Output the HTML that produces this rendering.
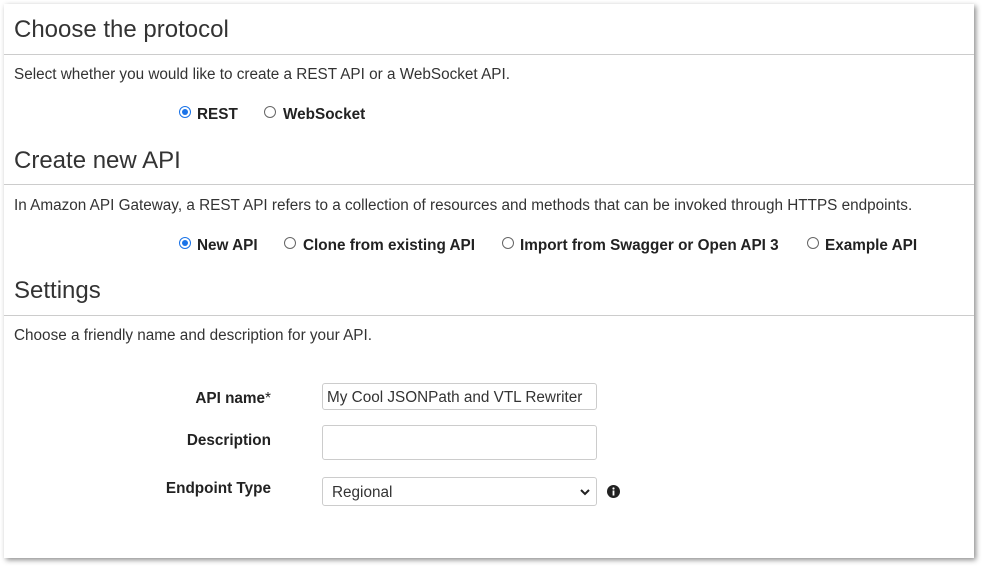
<!DOCTYPE html><html><head><style>
body{margin:0;background:#fff;width:983px;height:567px;overflow:hidden;font-family:"Liberation Sans",Arial,sans-serif;color:#222}
.card{position:absolute;left:4px;top:4px;width:970px;height:554px;background:#fff;box-shadow:2px 2px 5px rgba(0,0,0,.45)}
.a{position:absolute;white-space:nowrap}
h2{position:absolute;margin:0;left:10px;font-weight:normal;font-size:24px;color:#333}
.line{position:absolute;left:0;width:970px;height:1px;background:#ccc}
.p{font-size:15.3px;left:10px;color:#333}
.r{font-size:15.3px;font-weight:bold;color:#222}
.rad{position:absolute;width:12px;height:12px;border:1px solid #666;border-radius:50%;box-sizing:border-box}
.rad.on{border-color:#1a73e8}
.rad.on:after{content:"";position:absolute;left:2px;top:2px;width:6px;height:6px;border-radius:50%;background:#1a73e8}
.lbl{font-size:15.3px;font-weight:bold;text-align:right;width:160px}
.in{position:absolute;left:318px;width:275px;border:1px solid #ccc;border-radius:3px;box-sizing:border-box;font-size:15.3px;color:#333}
</style></head><body><div class="card">
<h2 style="top:12px">Choose the protocol</h2><div class="line" style="top:50px"></div>
<div class="a p" style="top:62px">Select whether you would like to create a REST API or a WebSocket API.</div>
<div class="rad on" style="left:175px;top:102px"></div><div class="a r" style="left:193px;top:102px">REST</div>
<div class="rad" style="left:260px;top:102px"></div><div class="a r" style="left:279px;top:102px">WebSocket</div>
<h2 style="top:143px">Create new API</h2><div class="line" style="top:180px"></div>
<div class="a p" style="top:193px">In Amazon API Gateway, a REST API refers to a collection of resources and methods that can be invoked through HTTPS endpoints.</div>
<div class="rad on" style="left:175px;top:233px"></div><div class="a r" style="left:193px;top:233px">New API</div>
<div class="rad" style="left:280px;top:233px"></div><div class="a r" style="left:299px;top:233px">Clone from existing API</div>
<div class="rad" style="left:498px;top:233px"></div><div class="a r" style="left:516px;top:233px">Import from Swagger or Open API 3</div>
<div class="rad" style="left:803px;top:233px"></div><div class="a r" style="left:821px;top:233px">Example API</div>
<h2 style="top:273px">Settings</h2><div class="line" style="top:311px"></div>
<div class="a p" style="top:323px">Choose a friendly name and description for your API.</div>
<div class="a lbl" style="left:107px;top:386px">API name<span style="font-weight:normal">*</span></div>
<div class="in" style="top:379px;height:27px;padding:5px 4px 3px">My Cool JSONPath and VTL Rewriter</div>
<div class="a lbl" style="left:107px;top:428px">Description</div>
<div class="in" style="top:421px;height:35px"></div>
<div class="a lbl" style="left:107px;top:476px">Endpoint Type</div>
<div class="in" style="top:473px;height:29px;padding:6px 9px 4px">Regional<svg style="position:absolute;right:6px;top:10px" width="10" height="8" viewBox="0 0 10 8"><path d="M1 2l4 4 4-4" stroke="#222" stroke-width="2" fill="none"/></svg></div>
<svg class="a" style="left:603px;top:481px" width="13" height="13" viewBox="0 0 13 13"><circle cx="6.5" cy="6.5" r="6.5" fill="#222"/><rect x="5.6" y="5.5" width="1.8" height="5" fill="#fff"/><circle cx="6.5" cy="3.5" r="1.1" fill="#fff"/></svg>
</div></body></html>
